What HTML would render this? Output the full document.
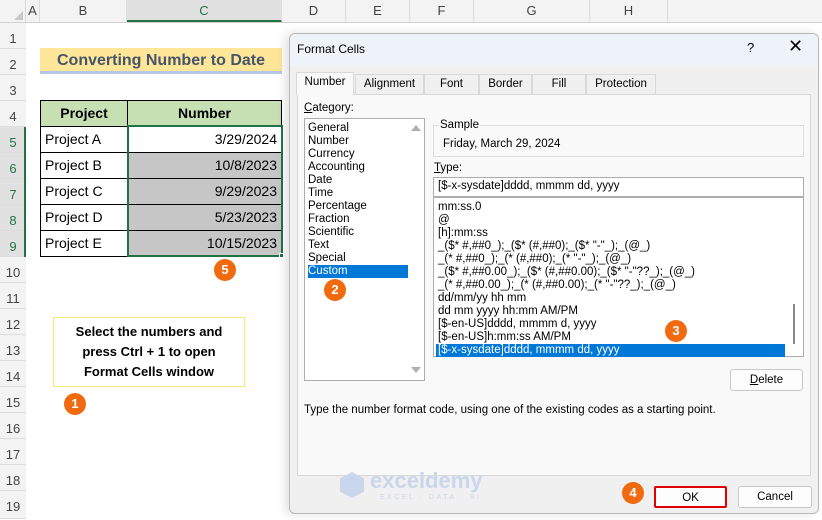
<!DOCTYPE html>
<html><head><meta charset="utf-8"><style>
*{margin:0;padding:0;box-sizing:border-box}
body{width:822px;height:519px;overflow:hidden;background:#fff;font-family:"Liberation Sans",sans-serif;position:relative;font-size:12px;color:#000}
.a{position:absolute}
.rh{position:absolute;left:0;width:26px;text-align:center;color:#444;font-size:13px;border-bottom:1px solid #dcdcdc;background:#f3f3f3;padding-top:3px}
.ch{position:absolute;top:0;height:22px;line-height:22px;text-align:center;color:#444;font-size:13px;background:#f3f3f3;border-right:1px solid #dcdcdc}
.cell{position:absolute;border:1px solid #000;font-size:14px;line-height:25px;padding:0 4px}
.badge{position:absolute;width:22px;height:22px;border-radius:50%;background:#f26a0f;color:#fff;font-weight:bold;font-size:13px;text-align:center;line-height:22px}
.dlg{font-size:11.5px}
.tab{position:absolute;top:74px;height:20px;line-height:19px;text-align:center;border:1px solid #d9d9d9;border-bottom:none;background:#f0f0f0;font-size:11.5px}
.li{height:13px;line-height:13px;white-space:nowrap}
.btn{position:absolute;height:22px;line-height:20px;text-align:center;background:#fdfdfd;border:1px solid #c8c8c8;border-radius:3px;font-size:11.5px}
</style></head><body>
<div class="a" style="left:0;top:0;width:26px;height:22px;background:#f3f3f3;border-right:1px solid #dcdcdc"></div>
<div class="a" style="left:14px;top:11px;width:0;height:0;border-left:9px solid transparent;border-bottom:9px solid #c8c8c8"></div>
<div class="ch" style="left:26px;width:14px">A</div>
<div class="ch" style="left:40px;width:87px">B</div>
<div class="ch" style="left:127px;width:155px;background:#e1e1e1;border-bottom:2px solid #217346;color:#217346">C</div>
<div class="ch" style="left:282px;width:64px">D</div>
<div class="ch" style="left:346px;width:64px">E</div>
<div class="ch" style="left:410px;width:64px">F</div>
<div class="ch" style="left:474px;width:116px">G</div>
<div class="ch" style="left:590px;width:78px">H</div>
<div class="ch" style="left:668px;width:154px;border-right:none"></div>
<div class="a" style="left:0;top:22px;width:822px;height:1px;background:#d0d0d0"></div>
<div class="a" style="left:25px;top:22px;width:1px;height:497px;background:#d0d0d0"></div>
<div class="rh" style="top:23px;height:26px;line-height:26px">1</div>
<div class="rh" style="top:49px;height:26px;line-height:26px">2</div>
<div class="rh" style="top:75px;height:26px;line-height:26px">3</div>
<div class="rh" style="top:101px;height:26px;line-height:26px">4</div>
<div class="rh" style="top:127px;height:26px;line-height:26px;background:#e1e1e1;color:#217346">5</div>
<div class="rh" style="top:153px;height:26px;line-height:26px;background:#e1e1e1;color:#217346">6</div>
<div class="rh" style="top:179px;height:26px;line-height:26px;background:#e1e1e1;color:#217346">7</div>
<div class="rh" style="top:205px;height:26px;line-height:26px;background:#e1e1e1;color:#217346">8</div>
<div class="rh" style="top:231px;height:26px;line-height:26px;background:#e1e1e1;color:#217346">9</div>
<div class="a" style="left:24px;top:127px;width:2px;height:130px;background:#217346"></div>
<div class="rh" style="top:257px;height:26px;line-height:26px">10</div>
<div class="rh" style="top:283px;height:26px;line-height:26px">11</div>
<div class="rh" style="top:309px;height:26px;line-height:26px">12</div>
<div class="rh" style="top:335px;height:26px;line-height:26px">13</div>
<div class="rh" style="top:361px;height:26px;line-height:26px">14</div>
<div class="rh" style="top:387px;height:26px;line-height:26px">15</div>
<div class="rh" style="top:413px;height:26px;line-height:26px">16</div>
<div class="rh" style="top:439px;height:26px;line-height:26px">17</div>
<div class="rh" style="top:465px;height:26px;line-height:26px">18</div>
<div class="rh" style="top:491px;height:28px;line-height:26px">19</div>
<div class="a" style="left:40px;top:48px;width:242px;height:26px;background:#ffe699;border-bottom:3px solid #b4c7e7;text-align:center;line-height:26px;font-weight:bold;font-size:16px;color:#44546a">Converting Number to Date</div>
<div class="cell" style="left:40px;top:100px;width:88px;height:27px;background:#c6e0b4;font-weight:bold;text-align:center;font-size:14px">Project</div>
<div class="cell" style="left:127px;top:100px;width:155px;height:27px;background:#c6e0b4;font-weight:bold;text-align:center;font-size:14px;border-left:1px solid #000">Number</div>
<div class="cell" style="left:40px;top:126px;width:88px;height:27px">Project A</div>
<div class="cell" style="left:40px;top:152px;width:88px;height:27px">Project B</div>
<div class="cell" style="left:40px;top:178px;width:88px;height:27px">Project C</div>
<div class="cell" style="left:40px;top:204px;width:88px;height:27px">Project D</div>
<div class="cell" style="left:40px;top:230px;width:88px;height:27px">Project E</div>
<div class="cell" style="left:127px;top:126px;width:155px;height:27px;text-align:right">3/29/2024</div>
<div class="cell" style="left:127px;top:152px;width:155px;height:27px;text-align:right;background:#c6c6c6">10/8/2023</div>
<div class="cell" style="left:127px;top:178px;width:155px;height:27px;text-align:right;background:#c6c6c6">9/29/2023</div>
<div class="cell" style="left:127px;top:204px;width:155px;height:27px;text-align:right;background:#c6c6c6">5/23/2023</div>
<div class="cell" style="left:127px;top:230px;width:155px;height:27px;text-align:right;background:#c6c6c6">10/15/2023</div>
<div class="a" style="left:127px;top:125px;width:156px;height:132px;border:2px solid #217346"></div>
<div class="a" style="left:279px;top:253px;width:5px;height:5px;background:#217346;border:1px solid #fff"></div>
<div class="badge" style="left:214px;top:259px">5</div>
<div class="a" style="left:53px;top:317px;width:192px;height:70px;border:1.5px solid #ffe57a;text-align:center;font-weight:bold;font-size:13px;line-height:20px;padding-top:4px">Select the numbers and<br>press Ctrl + 1 to open<br>Format Cells window</div>
<div class="badge" style="left:64px;top:393px">1</div>
<div class="a dlg" style="left:289px;top:33px;width:530px;height:481px;background:#f0f0f0;border:1px solid #b8b8b8;border-radius:6px;box-shadow:-4px 0 10px rgba(0,0,0,.12);overflow:hidden">
 <div class="a" style="left:0;top:0;width:530px;height:32px;background:#eef3f9"></div>
 <div class="a" style="left:7px;top:8px;font-size:12px">Format Cells</div>
 <div class="a" style="left:457px;top:6px;font-size:13px">?</div>
 <div class="a" style="left:498px;top:2px;font-size:18px;font-weight:300">✕</div>
 <div class="a" style="left:7px;top:60px;width:514px;height:382px;border:1px solid #d9d9d9;background:#f9f9f9"></div>
</div>
<div class="tab" style="left:296px;width:58px;top:72px;height:23px;background:#f9f9f9;border-bottom:none">Number</div>
<div class="tab" style="left:355px;width:69px">Alignment</div>
<div class="tab" style="left:424px;width:55px">Font</div>
<div class="tab" style="left:479px;width:53px">Border</div>
<div class="tab" style="left:532px;width:54px">Fill</div>
<div class="tab" style="left:586px;width:70px">Protection</div>
<div class="a" style="left:304px;top:102px;font-size:11.5px"><u>C</u>ategory:</div>
<div class="a" style="left:304px;top:118px;width:121px;height:263px;background:#fff;border:1px solid #adadad;padding:3px 0 0 3px;font-size:11.5px">
 <div class="li">General</div><div class="li">Number</div><div class="li">Currency</div><div class="li">Accounting</div><div class="li">Date</div><div class="li">Time</div><div class="li">Percentage</div><div class="li">Fraction</div><div class="li">Scientific</div><div class="li">Text</div><div class="li">Special</div>
 <div class="li" style="background:#0078d7;color:#fff;width:100px">Custom</div>
 <div class="a" style="left:106px;top:6px;border-left:5px solid transparent;border-right:5px solid transparent;border-bottom:6px solid #b0b0b0"></div>
 <div class="a" style="left:106px;top:248px;border-left:5px solid transparent;border-right:5px solid transparent;border-top:6px solid #b0b0b0"></div>
</div>
<div class="badge" style="left:324px;top:279px">2</div>
<div class="a" style="left:433px;top:125px;width:371px;height:32px;border:1px solid #dcdcdc"></div>
<div class="a" style="left:439px;top:119px;background:#f9f9f9;padding:0 1px;font-size:11.5px">Sample</div>
<div class="a" style="left:443px;top:138px;font-size:11.5px">Friday, March 29, 2024</div>
<div class="a" style="left:434px;top:162px;font-size:11.5px"><u>T</u>ype:</div>
<div class="a" style="left:433px;top:177px;width:371px;height:20px;background:#fff;border:1px solid #adadad;padding:2px 0 0 4px;font-size:11.5px">[$-x-sysdate]dddd, mmmm dd, yyyy</div>
<div class="a" style="left:433px;top:197px;width:371px;height:160px;background:#fff;border:1px solid #adadad;padding:3px 0 0 4px;font-size:11.5px">
 <div class="li">mm:ss.0</div><div class="li">@</div><div class="li">[h]:mm:ss</div>
 <div class="li">_($* #,##0_);_($* (#,##0);_($* "-"_);_(@_)</div>
 <div class="li">_(* #,##0_);_(* (#,##0);_(* "-"_);_(@_)</div>
 <div class="li">_($* #,##0.00_);_($* (#,##0.00);_($* "-"??_);_(@_)</div>
 <div class="li">_(* #,##0.00_);_(* (#,##0.00);_(* "-"??_);_(@_)</div>
 <div class="li">dd/mm/yy hh mm</div><div class="li">dd mm yyyy hh:mm AM/PM</div>
 <div class="li">[$-en-US]dddd, mmmm d, yyyy</div><div class="li">[$-en-US]h:mm:ss AM/PM</div>
 <div class="li" style="background:#0078d7;color:#fff;width:349px;margin-left:-2px;padding-left:2px">[$-x-sysdate]dddd, mmmm dd, yyyy</div>
 <div class="a" style="left:359px;top:106px;width:2px;height:40px;background:#888"></div>
</div>
<div class="badge" style="left:665px;top:320px">3</div>
<div class="btn" style="left:730px;top:369px;width:73px"><u>D</u>elete</div>
<div class="a" style="left:304px;top:404px;font-size:11.5px">Type the number format code, using one of the existing codes as a starting point.</div>
<div class="a" style="left:340px;top:472px;width:24px;height:26px;background:#c9d6ec;clip-path:polygon(50% 0,100% 25%,100% 75%,50% 100%,0 75%,0 25%)"></div>
<div class="a" style="left:370px;top:468px;font-size:22px;font-weight:bold;color:#c9d6ec">exceldemy</div>
<div class="a" style="left:380px;top:494px;font-size:7px;letter-spacing:2.5px;color:#ccd6e6">EXCEL · DATA · BI</div>
<div class="badge" style="left:622px;top:482px">4</div>
<div class="btn" style="left:654px;top:486px;width:73px;border:2px solid #e00000;border-radius:2px">OK</div>
<div class="btn" style="left:738px;top:486px;width:74px">Cancel</div>
</body></html>
